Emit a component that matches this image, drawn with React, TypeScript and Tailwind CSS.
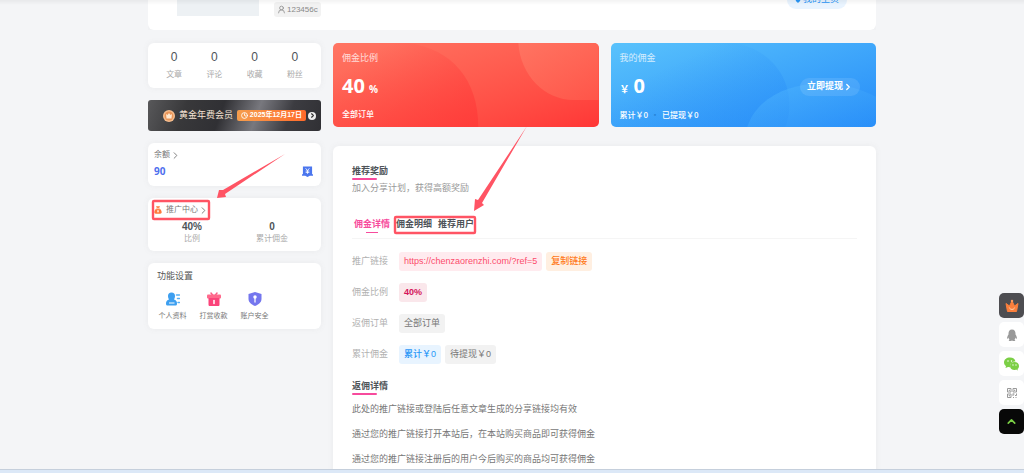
import type { ReactNode } from "react";
import { ChevronRight, ChevronUp, Clock, UserRound } from "lucide-react";

const STATS = [
  { label: "文章", value: 0 },
  { label: "评论", value: 0 },
  { label: "收藏", value: 0 },
  { label: "粉丝", value: 0 },
];

const RULES = [
  "此处的推广链接或登陆后任意文章生成的分享链接均有效",
  "通过您的推广链接打开本站后，在本站购买商品即可获得佣金",
  "通过您的推广链接注册后的用户今后购买的商品均可获得佣金",
];

function Card({ className, children }: { className: string; children: ReactNode }) {
  return <div className={`bg-white rounded-md shadow-[0_0_6px_rgba(116,116,116,0.08)] ${className}`}>{children}</div>;
}

function Title({ children }: { children: ReactNode }) {
  return (
    <h2 className="flex flex-col items-start text-[9px] leading-[14px] font-bold text-[#4e5358]">
      {children}
      <span className="w-[25px] h-[2px] rounded-full bg-[#f74b9d]" />
    </h2>
  );
}

function Row({ label, children }: { label: string; children: ReactNode }) {
  return (
    <div className="flex items-center h-[19px]">
      <span className="w-[47px] text-[#b1b1b1]">{label}</span>
      <div className="flex items-center gap-1">{children}</div>
    </div>
  );
}

function CrownIcon() {
  return (
    <svg className="size-[14px]" viewBox="0 0 28 28">
      <path d="M2 9l7 5 5-10 5 10 7-5-3 16H5z" fill="#fb7f3c" stroke="#fb7f3c" strokeWidth="2" strokeLinejoin="round" />
      <circle cx="14" cy="4" r="2.500" fill="#ff9a5c" />
      <path d="M9 18c1 4 9 4 10 0" fill="none" stroke="#ffd9b8" strokeWidth="2" strokeLinecap="round" />
    </svg>
  );
}

function MemberIcon() {
  return (
    <svg className="size-[12px] shrink-0" viewBox="0 0 24 24">
      <circle cx="12" cy="12" r="12" fill="#f5bd8e" />
      <circle cx="12" cy="12" r="9" fill="#e99558" />
      <path d="M6 8l3 2 3-4 3 4 3-2-1 9H7z" fill="#ffe9d0" />
    </svg>
  );
}

function BalanceIcon() {
  return (
    <svg className="size-[11px]" viewBox="0 0 24 24">
      <path d="M2 1h20v17h2v3h-7l-5 3-5-3H0v-3h2z" fill="#4b76ee" />
      <path d="M8 5l4 5 4-5M12 10v7M8 11h8M8 14h8" stroke="#fff" strokeWidth="1.800" fill="none" />
    </svg>
  );
}

function MoneyBagIcon() {
  return (
    <svg className="size-[8px]" viewBox="0 0 24 24">
      <path d="M6 1h12l-3 6c5 3 8 7 8 12 0 3-2 4-4 4H5c-2 0-4-1-4-4C1 14 4 10 9 7z" fill="#ff7a3c" />
      <path d="M8 7h8M9 11l3 3 3-3M12 14v6M9 16h6" stroke="#fff" strokeWidth="2" fill="none" />
    </svg>
  );
}

function ProfileIcon() {
  return (
    <svg className="size-[14px]" viewBox="0 0 28 28">
      <path d="M11 1a7 7 0 0 1 7 7c0 3-1 5-2 7 4 1 6 4 6 8 0 3-1 4-3 4H3c-2 0-3-1-3-4 0-4 2-7 6-8-1-2-2-4-2-7a7 7 0 0 1 7-7z" fill="#3d9ff0" />
      <path d="M6 21h11v2H6z" fill="#fff" />
      <path d="M21 6h6M23 13h4M24 21h3" stroke="#56b0f5" strokeWidth="3" strokeLinecap="round" />
    </svg>
  );
}

function GiftIcon() {
  return (
    <svg className="size-[14px]" viewBox="0 0 28 28">
      <path d="M8 2l4 5M20 2l-4 5" stroke="#fb5c86" strokeWidth="3" strokeLinecap="round" />
      <rect x="0" y="5" width="28" height="8" rx="2" fill="#ff6a8c" />
      <path d="M3 12h22v13c0 2-1 3-3 3H6c-2 0-3-1-3-3z" fill="#fb437a" />
      <path d="M14 17v6" stroke="#fff" strokeWidth="3" strokeLinecap="round" />
    </svg>
  );
}

function ShieldIcon() {
  return (
    <svg className="size-[14px]" viewBox="0 0 28 28">
      <path d="M14 0l13 4v10c0 7-6 11-13 14C7 25 1 21 1 14V4z" fill="#7476ee" />
      <circle cx="14" cy="10" r="3.500" fill="#fff" />
      <path d="M14 11v9" stroke="#fff" strokeWidth="2.500" strokeLinecap="round" />
    </svg>
  );
}

function QQIcon() {
  return (
    <svg className="size-[12px]" viewBox="0 0 24 24" fill="#999">
      <path d="M12 1c-5 0-7 4-7 8v2c-2 3-3 6-3 8 0 1 1 1 3-2 0 2 1 3 2 4-2 1-2 3 0 3 2 0 4 0 5-1 1 1 3 1 5 1 2 0 2-2 0-3 1-1 2-2 2-4 2 3 3 3 3 2 0-2-1-5-3-8V9c0-4-2-8-7-8z" />
    </svg>
  );
}

function WechatIcon() {
  return (
    <svg className="size-[15px]" viewBox="0 0 30 30" fill="#7bcf45">
      <path d="M12 3C5 3 0 7 0 13c0 3 2 6 4 7l-1 4 5-2c1 0 3 1 4 0-1-7 5-11 11-11C22 6 18 3 12 3z" />
      <path d="M21 12c-5 0-9 3-9 8s4 8 9 8c1 0 2 0 3-1l4 2-1-3c2-1 3-4 3-6 0-5-4-8-9-8z" />
      <g fill="#fff">
        <circle cx="8" cy="10" r="1.500" />
        <circle cx="15" cy="10" r="1.500" />
        <circle cx="18" cy="18" r="1.300" />
        <circle cx="24" cy="18" r="1.300" />
      </g>
    </svg>
  );
}

function QrIcon() {
  return (
    <svg className="size-[10px]" viewBox="0 0 20 20" fill="none" stroke="#999" strokeWidth="2">
      <path d="M1 1h7v7H1zM12 1h7v7h-7zM1 12h7v7H1z" />
      <path d="M4 4h1v1H4zM15 4h1v1h-1zM4 15h1v1H4zM12 11v5M12 12h3M16 15h3v-4M12 19h2M17 19h2" />
    </svg>
  );
}

const TOOLS = [
  { label: "个人资料", icon: <ProfileIcon /> },
  { label: "打赏收款", icon: <GiftIcon /> },
  { label: "账户安全", icon: <ShieldIcon /> },
];

function Sidebar() {
  return (
    <aside className="w-[173px] shrink-0 flex flex-col gap-3">
      <Card className="h-[45px] px-[6px] grid grid-cols-4 items-center text-center">
        {STATS.map((s) => (
          <div key={s.label}>
            <div className="text-[12px] leading-[18px] text-[#4e5358]">{s.value}</div>
            <div className="text-[8px] leading-[18px] text-[#aaa]">{s.label}</div>
          </div>
        ))}
      </Card>

      <div className="h-[31px] rounded-[3px] flex items-center pl-[15px] pr-[5px] overflow-hidden bg-[linear-gradient(110deg,#58585a_0%,#38383a_22%,#303034_42%,#78787e_62%,#3c3c41_80%,#303034_100%)]">
        <MemberIcon />
        <span className="ml-[4px] text-[9px] text-[#f5e3d3] whitespace-nowrap">黄金年费会员</span>
        <span className="ml-auto h-[11px] px-[4px] rounded-[2px] flex items-center gap-[2px] text-[7px] font-bold text-white whitespace-nowrap bg-linear-to-r from-[#f59d4d] to-[#ff6a2a]">
          <Clock className="size-[7px]" strokeWidth={3} />
          2025年12月17日
        </span>
        <span className="ml-[2px] size-[8px] shrink-0 rounded-full bg-[#eee] text-[#333] flex items-center justify-center">
          <ChevronRight className="size-[7px]" strokeWidth={4} />
        </span>
      </div>

      <Card className="h-[43px] px-[6px] pt-[5px]">
        <a href="#balance" className="flex items-center text-[8px] leading-[14px] text-[#777]">
          余额
          <ChevronRight className="size-[11px]" />
        </a>
        <div className="flex items-center justify-between h-[18px] pr-[2px]">
          <span className="text-[10px] font-bold text-[#4f70ee] [font-family:'Noto_Sans',sans-serif]">90</span>
          <BalanceIcon />
        </div>
      </Card>

      <Card className="h-[53px] pl-[4px] pr-[9px] pt-[5px]">
        <a href="#promotion" className="flex items-center pl-[2px] text-[8px] leading-[14px] text-[#777]">
          <MoneyBagIcon />
          <span className="ml-[4px]">推广中心</span>
          <ChevronRight className="size-[11px]" />
        </a>
        <div className="grid grid-cols-2 text-center pt-[3px]">
          <div>
            <div className="text-[10px] leading-[13px] font-bold text-[#4e5358]">40%</div>
            <div className="text-[8px] leading-[12px] text-[#aaa]">比例</div>
          </div>
          <div>
            <div className="text-[10px] leading-[13px] font-bold text-[#4e5358]">0</div>
            <div className="text-[8px] leading-[12px] text-[#aaa]">累计佣金</div>
          </div>
        </div>
      </Card>

      <Card className="h-[66px] px-[4px] pt-[6px]">
        <h2 className="pl-[5px] text-[9px] leading-[15px] text-[#555]">功能设置</h2>
        <div className="flex pt-[8px]">
          {TOOLS.map((t) => (
            <a key={t.label} href="#settings" className="w-[41px] flex flex-col items-center gap-1 text-[7px] leading-[12px] text-[#777]">
              {t.icon}
              {t.label}
            </a>
          ))}
        </div>
      </Card>
    </aside>
  );
}

function RateCard() {
  return (
    <div className="relative h-[84px] rounded-[5px] overflow-hidden text-white px-[9px] pt-[8px] bg-linear-to-br from-[#ff7563] to-[#ff3636]">
      <svg className="absolute inset-0 w-full h-full" viewBox="0 0 265 84" preserveAspectRatio="none">
        <defs>
          <linearGradient id="rate-a" x1="0" y1="0" x2="1" y2="1">
            <stop offset="0.200" stopColor="#ff3636" stopOpacity="0" />
            <stop offset="1" stopColor="#ff3636" stopOpacity="0.650" />
          </linearGradient>
          <linearGradient id="rate-b" x1="0" y1="0" x2="1" y2="1">
            <stop offset="0" stopColor="#ff7865" stopOpacity="0.800" />
            <stop offset="1" stopColor="#ff6050" stopOpacity="0.600" />
          </linearGradient>
        </defs>
        <path d="M0 0h75c44 6 70 37 70 84H0z" fill="url(#rate-a)" />
        <path d="M185 0c2 33 27 57 55 57h25V0z" fill="url(#rate-b)" />
      </svg>
      <div className="relative">
        <div className="text-[9px] leading-[14px] opacity-75">佣金比例</div>
        <div className="flex items-baseline gap-[4px] mt-[6px] font-bold leading-[30px] [font-family:'Noto_Sans',sans-serif]">
          <span className="text-[20px]">40</span>
          <span className="text-[10px]">%</span>
        </div>
        <div className="mt-[4px] text-[8px] leading-[14px] font-medium">全部订单</div>
      </div>
    </div>
  );
}

function IncomeCard() {
  return (
    <div className="relative h-[84px] rounded-[5px] overflow-hidden text-white pl-[9px] pr-[16px] pt-[8px] bg-linear-to-br from-[#59c2fc] to-[#268bf8]">
      <svg className="absolute inset-0 w-full h-full" viewBox="0 0 265 84" preserveAspectRatio="none">
        <defs>
          <linearGradient id="income-a" x1="0" y1="0" x2="1" y2="1">
            <stop offset="0.300" stopColor="#268bf8" stopOpacity="0" />
            <stop offset="1" stopColor="#268bf8" stopOpacity="0.500" />
          </linearGradient>
          <linearGradient id="income-b" x1="0" y1="0" x2="1" y2="1">
            <stop offset="0" stopColor="#52b8fd" stopOpacity="0.600" />
            <stop offset="1" stopColor="#3098fa" stopOpacity="0.300" />
          </linearGradient>
        </defs>
        <path d="M0 0h122c34 5 56 31 56 62q0 12-4 22H0z" fill="url(#income-a)" />
        <path d="M136 84c14-44 81-56 129-30v30z" fill="url(#income-b)" />
      </svg>
      <div className="relative flex items-center justify-between">
        <div>
          <div className="text-[9px] leading-[14px] opacity-75">我的佣金</div>
          <div className="flex items-baseline gap-[4px] mt-[6px] font-bold leading-[30px] [font-family:'Noto_Sans','Noto_Sans_CJK_SC',sans-serif]">
            <span className="text-[10px]">￥</span>
            <span className="text-[20px]">0</span>
          </div>
          <div className="mt-[4px] flex gap-[3px] text-[8px] leading-[14px] font-medium [font-family:'Noto_Sans_CJK_SC',sans-serif]">
            <span>累计￥0</span>
            <span className="text-[#2583d8]">•</span>
            <span>已提现￥0</span>
          </div>
        </div>
        <button className="h-[18px] w-[60px] rounded-full bg-white/10 flex items-center justify-center text-[9px] font-bold">
          立即提现
          <ChevronRight className="size-[10px]" strokeWidth={3} />
        </button>
      </div>
    </div>
  );
}

function Promotion() {
  return (
    <Card className="h-[360px] shrink-0 mt-[19px] px-[19px] pt-[18px] text-[9px]">
      <Title>推荐奖励</Title>
      <p className="leading-[16px] text-[#999]">加入分享计划，获得高额奖励</p>

      <nav className="mt-[20px] h-[23px] flex gap-[6px] pl-[2px] border-b border-[#f5f5f5] leading-[16px] font-bold text-[#4e5358]">
        <button className="flex flex-col items-center text-[#f74b9d]">
          佣金详情
          <span className="w-[12px] h-px bg-[#f74b9d]" />
        </button>
        <button className="self-start">佣金明细</button>
        <button className="self-start">推荐用户</button>
      </nav>

      <div className="mt-[13px] flex flex-col gap-3">
        <Row label="推广链接">
          <span className="h-[19px] px-[5px] rounded-[3px] flex items-center bg-[#ffebef] text-[#fc4b6c]">https://chenzaorenzhi.com/?ref=5</span>
          <button className="h-[19px] px-[5px] rounded-[3px] bg-[#ffefe1] text-[#ff7a1a] font-medium">复制链接</button>
        </Row>
        <Row label="佣金比例">
          <span className="h-[19px] px-[5px] rounded-[3px] flex items-center bg-[#fae7eb] text-[#d4145a] font-bold">40%</span>
        </Row>
        <Row label="返佣订单">
          <span className="h-[19px] px-[5px] rounded-[3px] flex items-center bg-[#f2f2f2] text-[#777]">全部订单</span>
        </Row>
        <Row label="累计佣金">
          <span className="h-[19px] px-[5px] rounded-[3px] flex items-center bg-[#e8f4ff] text-[#2997f7] font-medium">累计￥0</span>
          <span className="h-[19px] px-[5px] rounded-[3px] flex items-center bg-[#f2f2f2] text-[#777]">待提现￥0</span>
        </Row>
      </div>

      <div className="mt-[15px]">
        <Title>返佣详情</Title>
        <div className="mt-[6px] flex flex-col gap-[9px] leading-[16px] text-[#777]">
          {RULES.map((r) => (
            <p key={r}>{r}</p>
          ))}
        </div>
      </div>
    </Card>
  );
}

/* 标注框和箭头 */
function Marks() {
  return (
    <svg className="absolute inset-0 w-full h-full pointer-events-none overflow-visible" fill="none" stroke="#ff5464">
      <rect x="5" y="201" width="56" height="18" rx="1" strokeWidth="2.400" />
      <rect x="247" y="217" width="80" height="16" rx="1" strokeWidth="2.400" />
      <path d="M137 154L75 190L71 190L69 198L78 197L77 194Z" fill="#ff5464" stroke="none" />
      <path d="M379 126L330 200L327 199L326 211L336 205L334 203Z" fill="#ff5464" stroke="none" />
    </svg>
  );
}

export default function App() {
  return (
    <div
      lang="zh-CN"
      className="h-screen flex flex-col overflow-hidden bg-[#f4f5f7] [font-family:'Liberation_Sans','Noto_Sans_CJK_SC',sans-serif]"
    >
      <main className="flex-1 min-h-0 overflow-hidden">
        <div className="relative max-w-[728px] mx-auto">
          {/* 用户信息 */}
          <div className="overflow-hidden">
            <Card className="h-[60px] -mt-[30px] px-[29px] flex items-start">
              <div className="w-[82px] h-[46px] bg-[#edf1f4]" />
              <span className="ml-[15px] mt-[32px] h-[15px] px-[3px] rounded-[3px] flex items-center gap-[1px] bg-[#f2f2f2] text-[8px] text-[#888]">
                <UserRound className="size-[9px]" />
                123456c
              </span>
              <a href="#home" className="ml-auto mt-[21px] h-[18px] w-[60px] rounded-full bg-[#e9f4ff] text-[#2997f7] text-[9px] flex items-center justify-center gap-[2px]">
                <svg className="size-[6px]" viewBox="0 0 12 12" fill="currentColor">
                  <path d="M6 0a5 5 0 0 1 5 5c0 3-3 5-5 7-2-2-5-4-5-7a5 5 0 0 1 5-5z" />
                </svg>
                我的主页
              </a>
            </Card>
          </div>

          <div className="flex gap-3 pt-[13px]">
            <Sidebar />
            <section className="flex-1 min-w-0">
              <div className="grid grid-cols-2 gap-3">
                <RateCard />
                <IncomeCard />
              </div>
              <Promotion />
            </section>
          </div>
          <Marks />
        </div>
      </main>

      <div className="fixed top-0 inset-x-0 h-[5px] bg-linear-to-b from-black/5 to-transparent" />

      {/* 悬浮按钮 */}
      <div className="fixed right-0 bottom-[39px] flex flex-col gap-1">
        <button aria-label="会员" className="size-[25px] rounded-[5px] bg-[#4d4d51] flex items-center justify-center">
          <CrownIcon />
        </button>
        <button aria-label="QQ" className="size-[25px] rounded-[5px] bg-white flex items-center justify-center">
          <QQIcon />
        </button>
        <button aria-label="微信" className="size-[25px] rounded-[5px] bg-white flex items-center justify-center">
          <WechatIcon />
        </button>
        <button aria-label="二维码" className="size-[25px] rounded-[5px] bg-white flex items-center justify-center">
          <QrIcon />
        </button>
        <button aria-label="返回顶部" className="size-[25px] rounded-[5px] bg-[#080808] text-[#7bcf45] flex items-center justify-center">
          <ChevronUp className="size-[13px]" strokeWidth={3} />
        </button>
      </div>

      <div className="h-[4px] shrink-0 border-t border-[#c5cfdc] bg-[#dce8f7]" />
    </div>
  );
}
